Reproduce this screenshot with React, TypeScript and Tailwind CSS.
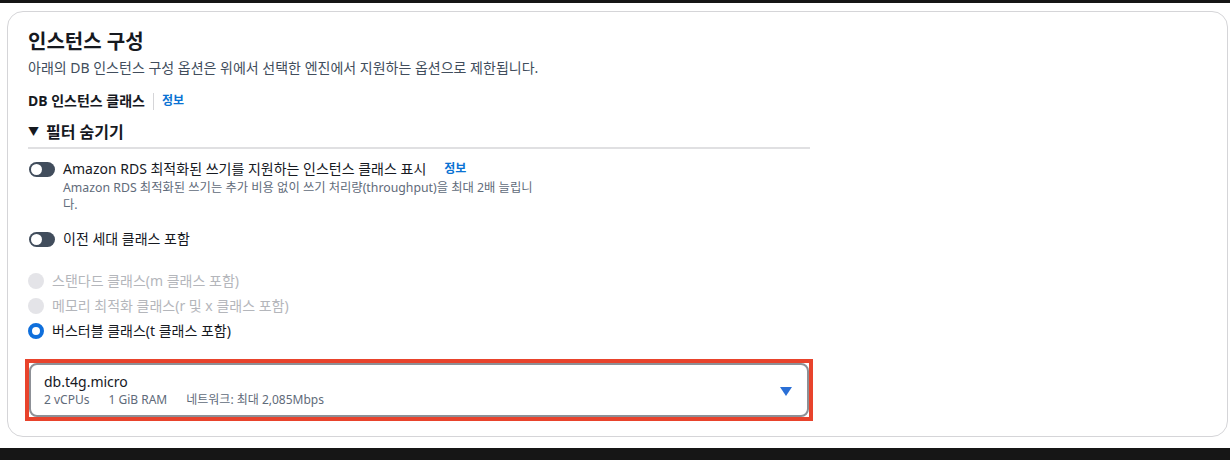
import React from "react";

const font = { fontFamily: '"Noto Sans", "Noto Sans CJK KR", sans-serif' };

function Toggle() {
  return (
    <div className="relative h-[15px] w-[26px] shrink-0 rounded-full bg-[#414d5c]">
      <div className="absolute left-[2px] top-[2px] h-[11px] w-[11px] rounded-full bg-white" />
    </div>
  );
}

function Radio({ state, label }: { state: "disabled" | "checked"; label: string }) {
  return (
    <div className="flex h-[25px] items-center">
      {state === "disabled" ? (
        <div className="h-[16px] w-[16px] shrink-0 rounded-full bg-[#e4e4e8]" />
      ) : (
        <div className="h-[16px] w-[16px] shrink-0 rounded-full border-[4.5px] border-[#0f6fdc] bg-white" />
      )}
      <span
        className={
          "ml-[8px] text-[14px] leading-5 " +
          (state === "disabled" ? "text-[#b4b6bb]" : "text-[#16191f]")
        }
      >
        {label}
      </span>
    </div>
  );
}

export default function App() {
  return (
    <div className="flex h-[460px] w-[1230px] flex-col bg-white" style={font}>
      <div className="h-[3px] shrink-0 bg-[#161616]" />
      <div className="flex flex-1 flex-col pb-[11px] pl-[7px] pr-[2px] pt-[8px]">
        <div className="flex flex-1 flex-col rounded-[16px] border border-[#d5d5d8] pl-[20px] pt-[18px]">
          <div className="text-[20px] font-bold leading-6 text-[#16191f]">인스턴스 구성</div>
          <div className="mt-[4px] text-[14px] leading-5 text-[#414d5c]">
            아래의 DB 인스턴스 구성 옵션은 위에서 선택한 엔진에서 지원하는 옵션으로 제한됩니다.
          </div>
          <div className="mt-[13px] flex h-5 items-center">
            <span className="text-[14px] font-bold leading-5 text-[#16191f]">DB 인스턴스 클래스</span>
            <span className="mx-[8px] h-[17px] w-px bg-[#d5d5d8]" />
            <span className="text-[12px] font-bold leading-5 text-[#0972d3]">정보</span>
          </div>
          <div className="mt-[9px] flex h-6 w-[782px] items-center">
            <span className="mt-[1px] text-[11px] text-[#16191f]">▼</span>
            <span className="ml-[7px] text-[16px] font-bold leading-6 text-[#16191f]">필터 숨기기</span>
          </div>
          <div className="mt-[3px] h-[2px] w-[782px] bg-[#e0e0e2]" />

          <div className="mt-[10px] flex items-start">
            <div className="ml-[1px] mt-[3px]">
              <Toggle />
            </div>
            <div className="ml-[8px] flex flex-col">
              <div className="flex h-5 items-center">
                <span className="text-[14px] leading-5 text-[#16191f]">
                  Amazon RDS 최적화된 쓰기를 지원하는 인스턴스 클래스 표시
                </span>
                <span className="ml-[18px] text-[12px] font-bold leading-5 text-[#0972d3]">정보</span>
              </div>
              <div className="w-[476px] text-[12.3px] leading-[17px] text-[#5f6b7a]">
                Amazon RDS 최적화된 쓰기는 추가 비용 없이 쓰기 처리량(throughput)을 최대 2배 늘립니다.
              </div>
            </div>
          </div>

          <div className="mt-[16px] flex h-5 items-center">
            <div className="ml-[1px]">
              <Toggle />
            </div>
            <span className="ml-[8px] text-[14px] leading-5 text-[#16191f]">이전 세대 클래스 포함</span>
          </div>

          <div className="mt-[19px] flex flex-col">
            <Radio state="disabled" label="스탠다드 클래스(m 클래스 포함)" />
            <Radio state="disabled" label="메모리 최적화 클래스(r 및 x 클래스 포함)" />
            <Radio state="checked" label="버스터블 클래스(t 클래스 포함)" />
          </div>

          <div className="ml-[-3px] mt-[16px] w-[788px] border-[4px] border-[#e8432c]">
            <div className="flex h-[54px] items-center rounded-[8px] border-2 border-[#8d9096] pl-[13px] pr-[15px]">
              <div className="flex flex-1 flex-col">
                <span className="text-[14px] leading-5 text-[#16191f]">db.t4g.micro</span>
                <div className="flex text-[12px] leading-4 text-[#5f6b7a]">
                  <span>2 vCPUs</span>
                  <span className="ml-[19px]">1 GiB RAM</span>
                  <span className="ml-[19px]">네트워크: 최대 2,085Mbps</span>
                </div>
              </div>
              <svg width="12" height="9" viewBox="0 0 12 9" className="mt-[3px]">
                <path d="M0 0 H12 L6 9 Z" fill="#2a6fd6" />
              </svg>
            </div>
          </div>
        </div>
      </div>
      <div className="h-[12px] shrink-0 bg-[#161616]" />
    </div>
  );
}
